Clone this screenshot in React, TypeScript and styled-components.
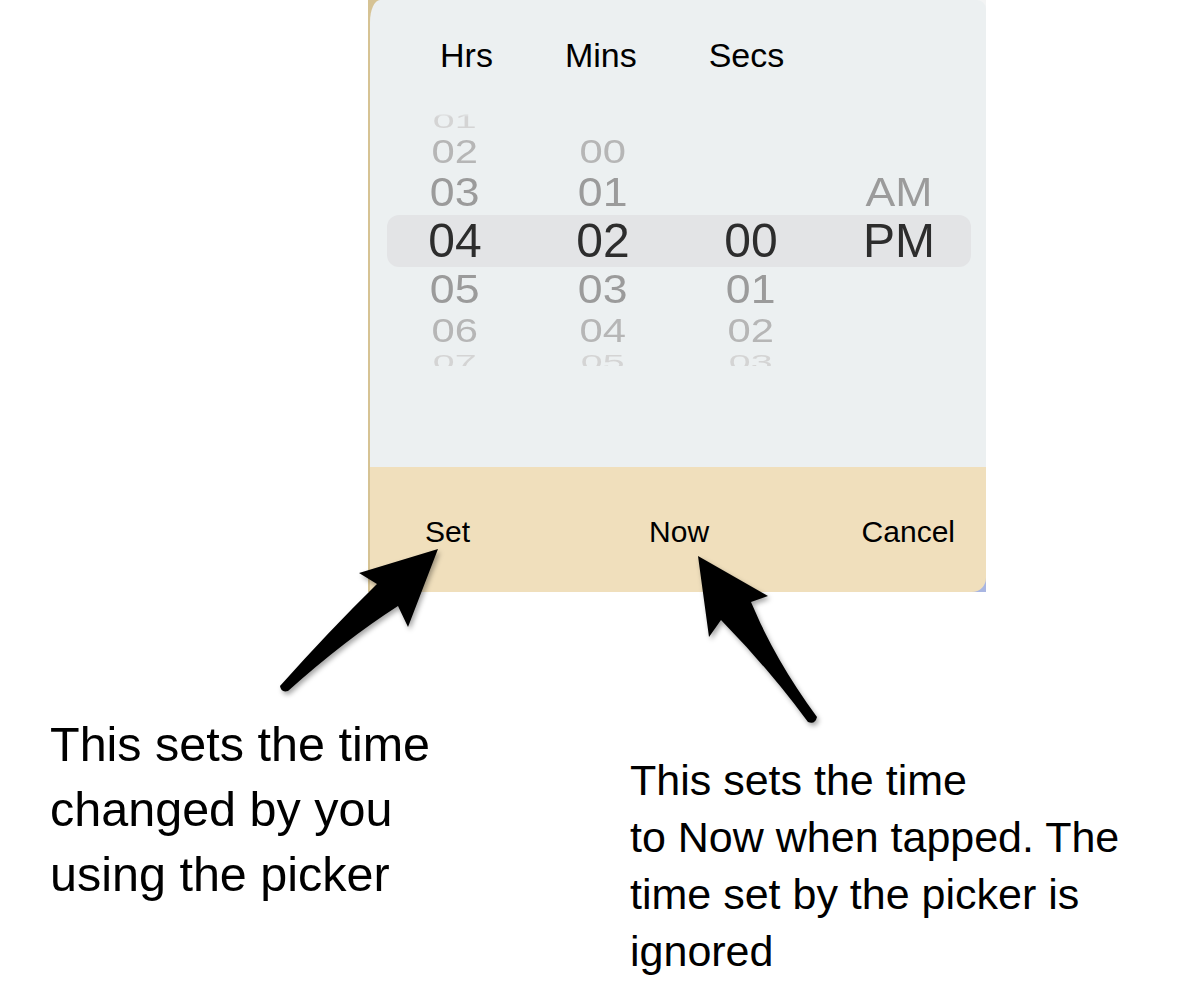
import React from "react";
import styled, { createGlobalStyle } from "styled-components";

const GlobalStyle = createGlobalStyle`
  html, body { margin: 0; padding: 0; background: #ffffff; }
  body { font-family: "Liberation Sans", Arial, Helvetica, sans-serif; }
`;

const Page = styled.div`
  position: relative;
  width: 1184px;
  height: 990px;
  overflow: hidden;
  background: #ffffff;
`;

const FrameRow = styled.div`
  display: flex;
  padding-left: 368px;
`;

const Frame = styled.div`
  width: 618px;
  height: 592px;
  padding-left: 2px;
  box-sizing: border-box;
  display: flex;
  background:
    linear-gradient(to top left, #a9b6e2 0 14px, transparent 14px),
    linear-gradient(to bottom left, #f3f4f4 0 11px, transparent 11px),
    #d6c394;
`;

const Panel = styled.div`
  flex: 1;
  display: flex;
  flex-direction: column;
  overflow: hidden;
  border-top-left-radius: 10px 22px;
  border-top-right-radius: 9px;
  border-bottom-right-radius: 14px;
`;

const PickerArea = styled.div`
  height: 467px;
  flex: none;
  background: #ecf0f1;
  padding-top: 35px;
  box-sizing: border-box;
  display: flex;
  flex-direction: column;
`;

const HeaderRow = styled.div`
  display: flex;
  gap: 72px;
  padding-left: 70px;
  height: 40px;
  font-size: 34px;
  line-height: 40px;
  color: #000;
`;

const HeaderLabel = styled.span`
  display: block;
`;

const Wheels = styled.div`
  margin-top: 33px;
  height: 258px;
  overflow: hidden;
  padding-left: 11px;
  display: grid;
  grid-template-columns: repeat(4, 148px);
  grid-template-rows: 25px 37px 45px 52px 45px 37px 25px;
  align-content: start;
  -webkit-mask-image: linear-gradient(to bottom, transparent 0, transparent 5px, #000 9px);
  mask-image: linear-gradient(to bottom, transparent 0, transparent 5px, #000 9px);
`;

const Band = styled.div`
  grid-row: 4;
  grid-column: 1 / -1;
  margin-left: 6px;
  margin-right: 2px;
  background: #e3e4e6;
  border-radius: 12px;
`;

const Cell = styled.div<{ $row: number; $col: number }>`
  grid-row: ${(p) => p.$row};
  grid-column: ${(p) => p.$col};
  display: flex;
  align-items: center;
  justify-content: center;
  overflow: visible;
  z-index: 1;
  min-height: 0;
`;

const Item = styled.span<{ $color: string; $sx: number; $sy: number }>`
  display: block;
  font-size: 48px;
  line-height: 52px;
  height: 52px;
  flex: none;
  color: ${(p) => p.$color};
  transform: scale(${(p) => p.$sx}, ${(p) => p.$sy});
  white-space: nowrap;
`;

const ButtonBar = styled.div`
  flex: 1;
  background: #f0dfbc;
  display: flex;
  align-items: flex-start;
  padding: 48px 31px 0 55px;
  font-size: 30px;
  line-height: 34px;
  color: #000;
`;

const BarButton = styled.span<{ $ml?: string }>`
  margin-left: ${(p) => p.$ml ?? "0"};
`;

const Notes = styled.div`
  display: flex;
  align-items: flex-start;
  padding-left: 50px;
  margin-top: 120px;
`;

const Note = styled.p<{ $size: number; $lh: number; $mt: number; $ml: number; $w: number }>`
  margin: ${(p) => p.$mt}px 0 0 ${(p) => p.$ml}px;
  width: ${(p) => p.$w}px;
  font-size: ${(p) => p.$size}px;
  line-height: ${(p) => p.$lh}px;
  color: #000;
`;

const Overlay = styled.svg`
  position: absolute;
  left: 0;
  top: 0;
  pointer-events: none;
  overflow: visible;
`;

const styleFor: Record<number, { color: string; sx: number; sy: number }> = {
  0: { color: "#2d2d2d", sx: 1, sy: 1 },
  1: { color: "#9b9b9b", sx: 0.93, sy: 0.83 },
  2: { color: "#b6b6b6", sx: 0.87, sy: 0.7 },
  3: { color: "#d4d4d4", sx: 0.82, sy: 0.42 },
};

const columns: Record<number, string>[] = [
  { [-3]: "01", [-2]: "02", [-1]: "03", 0: "04", 1: "05", 2: "06", 3: "07" },
  { [-2]: "00", [-1]: "01", 0: "02", 1: "03", 2: "04", 3: "05" },
  { 0: "00", 1: "01", 2: "02", 3: "03" },
  { [-1]: "AM", 0: "PM" },
];

const offsets = [-3, -2, -1, 0, 1, 2, 3];

export default function App() {
  return (
    <Page>
      <GlobalStyle />
      <FrameRow>
        <Frame>
          <Panel>
            <PickerArea>
              <HeaderRow>
                <HeaderLabel>Hrs</HeaderLabel>
                <HeaderLabel>Mins</HeaderLabel>
                <HeaderLabel>Secs</HeaderLabel>
              </HeaderRow>
              <Wheels>
                <Band />
                {columns.map((col, ci) =>
                  offsets.map((off, ri) => {
                    const v = col[off];
                    if (!v) return null;
                    const s = styleFor[Math.abs(off)];
                    return (
                      <Cell key={`${ci}-${off}`} $row={ri + 1} $col={ci + 1}>
                        <Item $color={s.color} $sx={s.sx} $sy={s.sy}>
                          {v}
                        </Item>
                      </Cell>
                    );
                  })
                )}
              </Wheels>
            </PickerArea>
            <ButtonBar>
              <BarButton>Set</BarButton>
              <BarButton $ml="179px">Now</BarButton>
              <BarButton $ml="auto">Cancel</BarButton>
            </ButtonBar>
          </Panel>
        </Frame>
      </FrameRow>
      <Notes>
        <Note $size={48.5} $lh={65} $mt={0} $ml={0} $w={420}>
          This sets the time
          <br />
          changed by you
          <br />
          using the picker
        </Note>
        <Note $size={43} $lh={57} $mt={40} $ml={160} $w={520}>
          This sets the time
          <br />
          to Now when tapped. The
          <br />
          time set by the picker is
          <br />
          ignored
        </Note>
      </Notes>
      <Overlay width={1184} height={990} viewBox="0 0 1184 990">
        <defs>
          <filter id="arrowShadow" x="-20%" y="-20%" width="140%" height="140%">
            <feDropShadow dx="2" dy="3" stdDeviation="2.5" floodColor="#000" floodOpacity="0.35" />
          </filter>
        </defs>
        <path
          d="M438,549 L359,573 L377,584 Q330,630 280,686 Q281,693 288,691 Q345,640 398,606 L408,627 Z"
          fill="#000"
          strokeLinejoin="round"
          filter="url(#arrowShadow)"
        />
        <path
          d="M698,556 L768,596 L751,602 Q775,660 817,717 Q815,725 808,722 Q770,670 721,620 L709,637 Z"
          fill="#000"
          strokeLinejoin="round"
          filter="url(#arrowShadow)"
        />
      </Overlay>
    </Page>
  );
}
